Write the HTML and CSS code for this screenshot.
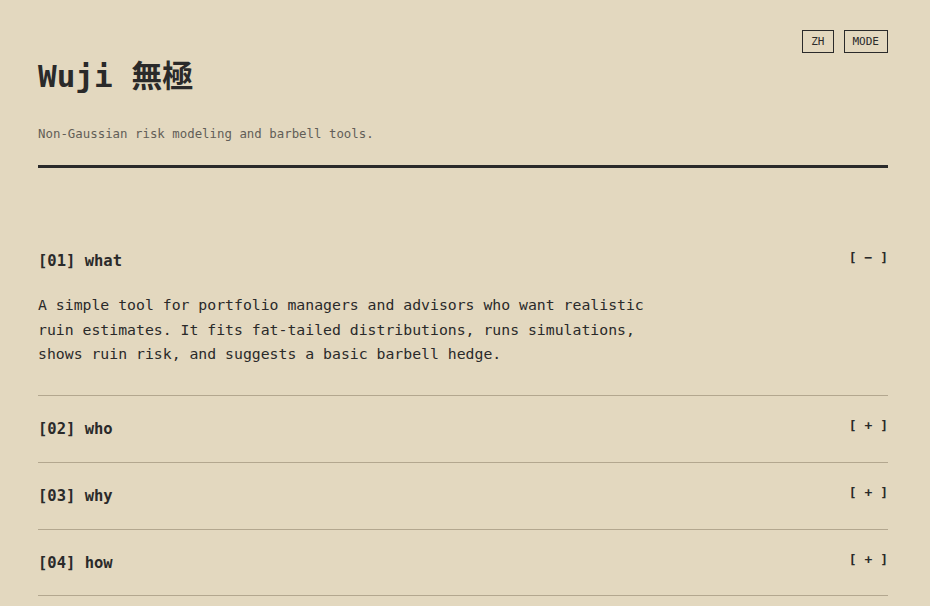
FILE: index.html
```html
<!DOCTYPE html>
<html lang="en">
<head>
<meta charset="utf-8">
<title>Wuji 無極</title>
<link rel="stylesheet" href="styles.css">
</head>
<body>
<div class="page">
  <header class="header">
    <div class="controls">
      <button class="btn">ZH</button>
      <button class="btn">MODE</button>
    </div>
    <h1 class="title">Wuji 無極</h1>
    <p class="subtitle">Non-Gaussian risk modeling and barbell tools.</p>
  </header>
  <main class="sections">
    <section class="item open">
      <div class="item-head">
        <h2 class="item-title">[01] what</h2>
        <span class="toggle">[ &minus; ]</span>
      </div>
      <p class="item-body">A simple tool for portfolio managers and advisors who want realistic<br>ruin estimates. It fits fat-tailed distributions, runs simulations,<br>shows ruin risk, and suggests a basic barbell hedge.</p>
    </section>
    <section class="item">
      <div class="item-head">
        <h2 class="item-title">[02] who</h2>
        <span class="toggle">[ + ]</span>
      </div>
    </section>
    <section class="item">
      <div class="item-head">
        <h2 class="item-title">[03] why</h2>
        <span class="toggle">[ + ]</span>
      </div>
    </section>
    <section class="item">
      <div class="item-head">
        <h2 class="item-title">[04] how</h2>
        <span class="toggle">[ + ]</span>
      </div>
    </section>
  </main>
</div>
</body>
</html>
```
FILE: styles.css
```css
* { box-sizing: border-box; }
html, body {
  margin: 0;
  background: #e3d8bf;
  color: #2a2a2a;
  font-family: "DejaVu Sans Mono", "Noto Sans CJK SC", monospace;
}
.page {
  padding: 30px 42px 0 38px;
}
.header {
  border-bottom: 3px solid #2a2a2a;
  padding-bottom: 21px;
}
.controls {
  display: flex;
  justify-content: flex-end;
  gap: 10px;
}
.btn {
  font-family: "DejaVu Sans Mono", monospace;
  font-size: 11px;
  line-height: 13px;
  padding: 4px 8px;
  background: transparent;
  color: #2a2a2a;
  border: 1px solid #2a2a2a;
  border-radius: 0;
}
.title {
  margin: 5px 0 0;
  font-size: 31px;
  line-height: 37px;
  font-weight: bold;
}
.subtitle {
  margin: 29px 0 0;
  font-size: 12.4px;
  line-height: 20px;
  color: #625e57;
}
.sections {
  margin-top: 60px;
}
.item {
  border-bottom: 1px solid #b3a78f;
  padding: 22px 0 21.6px;
}
.item-head {
  display: flex;
  justify-content: space-between;
  align-items: flex-start;
}
.item-title {
  margin: 0;
  font-size: 15.5px;
  line-height: 22px;
  font-weight: bold;
}
.toggle {
  font-size: 13px;
  line-height: 16px;
  font-weight: bold;
  white-space: pre;
}
.item-body {
  margin: 21px 0 7.4px;
  font-size: 14.8px;
  line-height: 24.5px;
}
```
